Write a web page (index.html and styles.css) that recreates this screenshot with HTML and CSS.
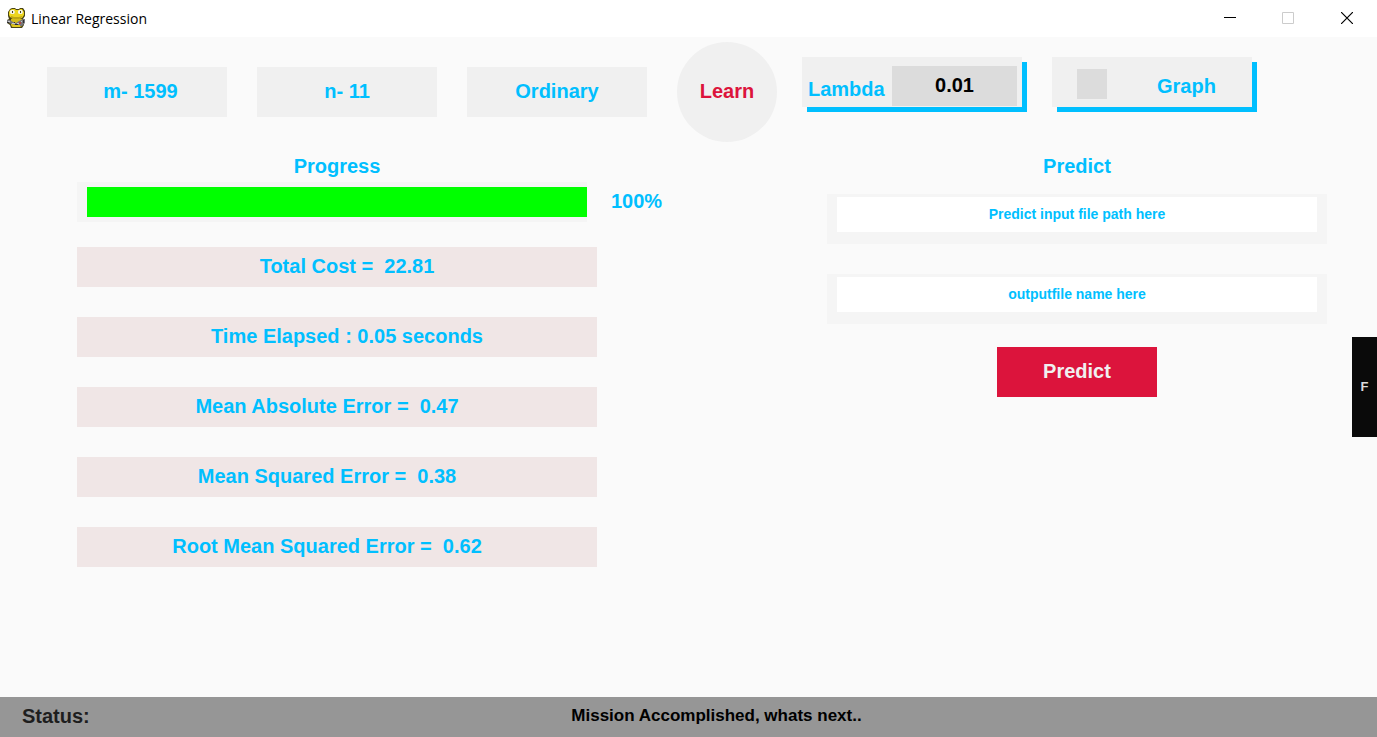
FILE: index.html
```
<!DOCTYPE html>
<html lang="en">
<head>
<meta charset="utf-8">
<title>Linear Regression</title>
<link rel="stylesheet" href="styles.css">
</head>
<body>
<div class="window">
  <header class="titlebar">
    <svg class="app-icon" width="20" height="20" viewBox="0 0 20 20" aria-hidden="true">
      <path d="M4 1l2-1h3l1 1h3l1-1h3l2 3v5l-2 3 1 2v4l-2 3H5l-1-3-3-2v-3l2-1-1-3V4z" fill="#4a4416"/>
      <path d="M4 2l2-1h3l1 1h3l1-1h2l2 3v3l-2 3-3 1H7L4 9 3 7V4z" fill="#ecd51f"/>
      <path d="M5 11h11v7l-2 1H6l-1-2z" fill="#d6bd1a"/>
      <path d="M4 3l1-1h3l1 2-1 2H5L4 5zM12 3l1-1h3l1 2-1 2h-3l-1-1z" fill="#f4f3e4"/>
      <path d="M6 3h1v2H6zM14 3h1v2h-1z" fill="#44401c"/>
      <path d="M5 8l3 1h5l3-1v1l-3 2H8L5 10z" fill="#bda516"/>
      <path d="M1 12h3l3 2 3 1 3-2 4-2h2v4l-3 3h-3l-3-1-4-1-3-1-2-1z" fill="#77777a"/>
      <path d="M2 13h2v1H2zM6 15h3v1H6zM11 15h2v1h-2zM15 13h1v1h-1z" fill="#c5c5c8"/>
      <path d="M1 14h2v1H1zM8 14h1v1H8zM17 12h1v3h-1zM9 16h3v1H9z" fill="#303032"/>
      <path d="M13 14h2v2h-2z" fill="#b5443c"/>
      <path d="M7 17h7v2H7z" fill="#e3ca1d"/>
    </svg>
    <span class="title">Linear Regression</span>
    <button class="win-btn" aria-label="Minimize"><svg width="12" height="12" viewBox="0 0 12 12"><path d="M0 5.500h12" stroke="#000"/></svg></button>
    <button class="win-btn" aria-label="Maximize" disabled><svg width="12" height="12" viewBox="0 0 12 12"><path d="M.5.5h11v11H.5z" fill="none" stroke="#ccc"/></svg></button>
    <button class="win-btn close" aria-label="Close"><svg width="12" height="12" viewBox="0 0 12 12"><path d="M0 0l12 12M12 0L0 12" stroke="#000" stroke-width="1.200"/></svg></button>
  </header>

  <main class="content">
    <div class="toolbar">
      <button class="option"> m- 1599</button>
      <button class="option">n- 11</button>
      <button class="option">Ordinary</button>
      <button class="learn">Learn</button>
      <div class="raised lambda">
        <label for="lambda">Lambda</label>
        <input id="lambda" type="text" value="0.01">
      </div>
      <div class="raised graph">
        <input id="graph" type="checkbox">
        <label for="graph">Graph</label>
      </div>
    </div>

    <div class="panels">
      <section class="results">
        <h2 class="heading">Progress</h2>
        <div class="progress">
          <div class="track"><div class="fill"></div></div>
          <span class="percent">100%</span>
        </div>
        <div class="metrics">
          <p class="metric summary">Total Cost =  22.81</p>
          <p class="metric summary">Time Elapsed : 0.05 seconds</p>
          <p class="metric error">Mean Absolute Error =  0.47</p>
          <p class="metric error">Mean Squared Error =  0.38</p>
          <p class="metric error">Root Mean Squared Error =  0.62</p>
        </div>
      </section>

      <section class="predict">
        <h2 class="heading">Predict</h2>
        <div class="fields">
          <div class="field"><input type="text" aria-label="Predict input file path" placeholder="Predict input file path here"></div>
          <div class="field"><input type="text" aria-label="Output file name" placeholder="outputfile name here"></div>
        </div>
        <button class="predict-btn">Predict</button>
      </section>
    </div>
    <button class="side-tab">F</button>
  </main>

  <footer class="status">
    <span class="status-label">Status:</span>
    <span class="status-text">Mission Accomplished, whats next..</span>
  </footer>
</div>
</body>
</html>
```
FILE: styles.css
```
* { box-sizing: border-box; }

body {
  margin: 0;
  background: #fafafa;
  color: #00bfff;
  font: bold 20px/24px "Liberation Sans", Arial, sans-serif;
}

button, input {
  margin: 0;
  padding: 0;
  border: 0;
  border-radius: 0;
  font: inherit;
  color: inherit;
}

.window {
  display: flex;
  flex-direction: column;
  min-height: 100vh;
}

.titlebar {
  display: flex;
  align-items: center;
  height: 37px;
  padding-left: 6px;
  background: #fff;
}

.app-icon { margin-bottom: 1px; }

.title {
  flex: 1;
  margin-left: 5px;
  color: #000;
  font: 14px/20px "Open Sans", "Noto Sans", sans-serif;
}

.win-btn {
  display: flex;
  align-items: center;
  justify-content: center;
  width: 58px;
  height: 36px;
  padding-bottom: 2px;
  background: none;
}

.close { width: 60px; }

.content {
  position: relative;
  flex: 1;
  padding-top: 5px;
}

.toolbar {
  display: flex;
  align-items: center;
  padding: 0 47px;
}

.option {
  width: 180px;
  height: 50px;
  margin-right: 30px;
  padding-bottom: 2px;
  background: #f0f0f0;
}

.option:first-child { padding-left: 7px; }

.learn {
  width: 100px;
  height: 100px;
  margin-right: 25px;
  padding-bottom: 2px;
  border-radius: 50%;
  background: #f0f0f0;
  color: #dc143c;
}

.raised {
  display: flex;
  align-items: center;
  align-self: flex-start;
  height: 50px;
  margin-top: 15px;
  background: #f0f0f0;
  box-shadow: 5px 5px 0 #00bfff;
}

.lambda {
  justify-content: space-between;
  width: 220px;
  margin-right: 30px;
  padding: 9px 5px 1px 6px;
}

.lambda label { padding-top: 5px; }

.lambda input {
  width: 125px;
  height: 40px;
  padding-bottom: 2px;
  background: #dcdcdc;
  color: #000;
  text-align: center;
}

.graph {
  gap: 50px;
  width: 200px;
  padding: 4px 0 0 25px;
}

.graph label { padding-top: 4px; }

.graph input {
  appearance: none;
  width: 30px;
  height: 30px;
  background: #dcdcdc;
}

.graph input:checked { background: #00bfff; }

.panels {
  display: grid;
  grid-template-columns: 586fr 500fr;
  column-gap: 164px;
  padding: 12px 50px 30px 77px;
}

.heading {
  margin: 0;
  font: inherit;
  text-align: center;
}

.results .heading { margin-right: 66px; }

.progress {
  display: flex;
  align-items: center;
  gap: 24px;
  margin-top: 4px;
}

.track {
  flex: 1;
  height: 40px;
  padding: 5px 0 5px 10px;
  background: #f5f5f5;
}

.fill {
  height: 100%;
  background: #0f0;
}

.percent {
  width: 52px;
  padding-bottom: 2px;
}

.metrics {
  display: grid;
  gap: 30px;
  margin: 25px 66px 0 0;
}

.metric {
  margin: 0;
  padding: 7px 0 9px;
  background: #f0e6e6;
  text-align: center;
  white-space: pre;
}

.summary { padding-left: 20px; }
.error { padding-right: 20px; }

.fields {
  display: grid;
  gap: 30px;
  margin: 16px 0 23px;
}

.field {
  height: 50px;
  padding: 3px 10px 0;
  background: #f5f5f5;
}

.field input {
  display: block;
  width: 100%;
  height: 35px;
  padding-bottom: 2px;
  background: #fff;
  font-size: 14px;
  text-align: center;
}

.field input::placeholder {
  color: #00bfff;
  opacity: 1;
}

.predict-btn {
  display: block;
  width: 160px;
  height: 50px;
  margin: 0 auto;
  padding-bottom: 2px;
  background: #dc143c;
  color: #f0f0f0;
}

.side-tab {
  position: absolute;
  top: 300px;
  right: 0;
  width: 25px;
  height: 100px;
  background: #0a0a0a;
  color: #dcdcdc;
  font-size: 13px;
}

.status {
  display: grid;
  grid-template-columns: 80px 1fr;
  align-items: center;
  height: 40px;
  padding: 0 46px 2px 22px;
  background: #969696;
  color: #1e1e1e;
}

.status-text {
  color: #000;
  font-size: 17px;
  text-align: center;
}
```
